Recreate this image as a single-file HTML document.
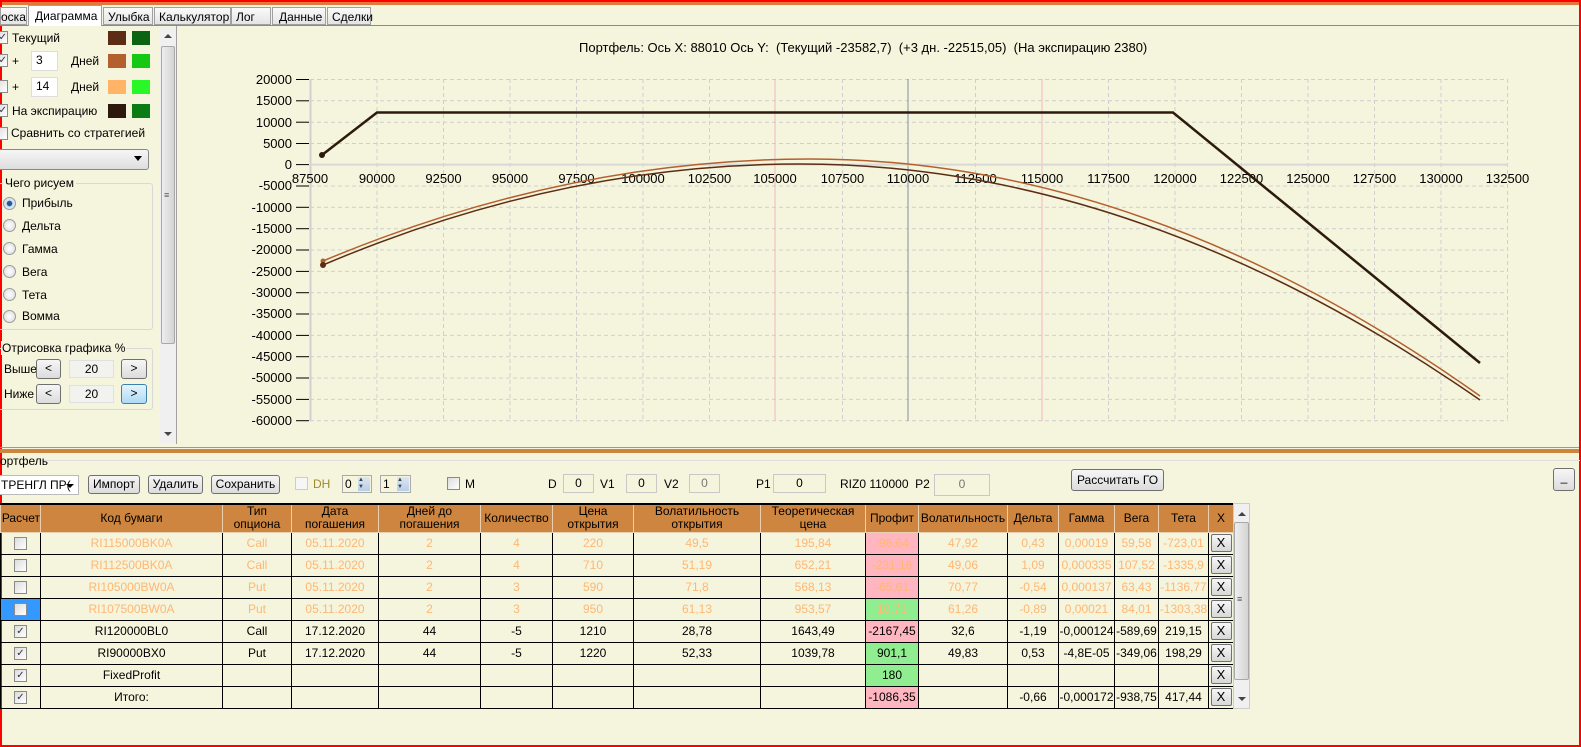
<!DOCTYPE html>
<html><head><meta charset="utf-8"><style>
*{box-sizing:border-box;margin:0;padding:0}
body{width:1581px;height:747px;overflow:hidden;background:#f5f4dc;font-family:"Liberation Sans",sans-serif;font-size:12px;color:#000;position:relative}
.a{position:absolute;white-space:nowrap}
.btn{position:absolute;border:1px solid #707070;border-radius:3px;background:linear-gradient(#f6f6f6,#dcdcdc);text-align:center;font-size:12px;line-height:16px}
.box{position:absolute;border:1px solid #c8c8c8;background:#f5f4dc;text-align:center;line-height:16px}
.cb{position:absolute;width:13px;height:13px;border:1px solid #8a8a8a;background:linear-gradient(135deg,#dcdcdc,#fff);font-size:10px;line-height:11px;color:#334;text-align:center}
.sw{position:absolute;width:18px;height:14px}
.rd{position:absolute;width:13px;height:13px;border-radius:50%;border:1px solid #9a9a9a;background:radial-gradient(#fff,#d8d8d8)}
table{position:absolute;left:0;top:503px;border-collapse:collapse;table-layout:fixed;font-size:12px}
td,th{border:1px solid #000;height:22px;text-align:center;overflow:hidden;white-space:nowrap;padding:0}
th{background:#cd853f;font-weight:normal;height:28px;border-color:#e8d0b0;border-top:2px solid #000;line-height:13px}
tr.f td{color:#ffb774}
.pk{background:#ffb6c1}.gr{background:#90ee90}
.x{display:inline-block;width:21px;height:18px;border:1px solid #707070;border-radius:2px;background:linear-gradient(#f6f6f6,#d8d8d8);color:#000;line-height:16px;font-size:13px}
.c{display:inline-block;width:13px;height:13px;border:1px solid #8a8a8a;background:linear-gradient(135deg,#dcdcdc,#fff);vertical-align:middle;font-size:10px;line-height:11px;color:#334}
</style></head><body>
<div class="a" style="left:0;top:0;width:1581px;height:5px;background:#e07a3c;border-top:2px solid #f00"></div>
<div class="a" style="left:0;top:0;width:2px;height:747px;background:#f00"></div>
<div class="a" style="left:1579px;top:0;width:2px;height:747px;background:#f00"></div>
<div class="a" style="left:0;top:745px;width:1581px;height:2px;background:#f00"></div>
<div class="a" style="left:0;top:25px;width:1579px;height:1px;background:#8a8a8a"></div>
<div class="a" style="left:0;top:7px;width:27px;height:18px;border:1px solid #a0a0a0;background:linear-gradient(#fafafa,#e4e4e4);padding:2px 0 0 0">оска</div>
<div class="a" style="left:28px;top:5px;width:74px;height:21px;border:1px solid #a0a0a0;border-bottom:none;background:#fff;padding:3px 0 0 6px">Диаграмма</div>
<div class="a" style="left:103px;top:7px;width:50px;height:18px;border:1px solid #a0a0a0;background:linear-gradient(#fafafa,#e4e4e4);padding:2px 0 0 4px">Улыбка</div>
<div class="a" style="left:154px;top:7px;width:77px;height:18px;border:1px solid #a0a0a0;background:linear-gradient(#fafafa,#e4e4e4);padding:2px 0 0 4px">Калькулятор</div>
<div class="a" style="left:231px;top:7px;width:40px;height:18px;border:1px solid #a0a0a0;background:linear-gradient(#fafafa,#e4e4e4);padding:2px 0 0 4px">Лог</div>
<div class="a" style="left:272px;top:7px;width:54px;height:18px;border:1px solid #a0a0a0;background:linear-gradient(#fafafa,#e4e4e4);padding:2px 0 0 6px">Данные</div>
<div class="a" style="left:327px;top:7px;width:44px;height:18px;border:1px solid #a0a0a0;background:linear-gradient(#fafafa,#e4e4e4);padding:2px 0 0 4px">Сделки</div>
<div class="a" style="left:176px;top:26px;width:1px;height:418px;background:#a0a0a0"></div>
<div class="cb" style="left:-5px;top:31px;text-align:right">✓</div><div class="a" style="left:12px;top:31px">Текущий</div>
<div class="sw" style="left:108px;top:31px;background:#5c2d14"></div><div class="sw" style="left:132px;top:31px;background:#0a6412"></div>
<div class="cb" style="left:-5px;top:54px;text-align:right">✓</div><div class="a" style="left:12px;top:54px">+</div>
<div class="box" style="left:31px;top:51px;width:27px;height:20px;background:#fff;border-color:#ddd;text-align:left;padding-left:4px">3</div>
<div class="a" style="left:71px;top:54px">Дней</div>
<div class="sw" style="left:108px;top:54px;background:#b4602e"></div><div class="sw" style="left:132px;top:54px;background:#14c814"></div>
<div class="cb" style="left:-5px;top:80px"></div><div class="a" style="left:12px;top:80px">+</div>
<div class="box" style="left:31px;top:77px;width:27px;height:20px;background:#fff;border-color:#ddd;text-align:left;padding-left:4px">14</div>
<div class="a" style="left:71px;top:80px">Дней</div>
<div class="sw" style="left:108px;top:80px;background:#ffb468"></div><div class="sw" style="left:132px;top:80px;background:#28f828"></div>
<div class="cb" style="left:-5px;top:104px;text-align:right">✓</div><div class="a" style="left:12px;top:104px">На экспирацию</div>
<div class="sw" style="left:108px;top:104px;background:#2e1a0c"></div><div class="sw" style="left:132px;top:104px;background:#0a7c14"></div>
<div class="cb" style="left:-5px;top:127px"></div><div class="a" style="left:11px;top:126px">Сравнить со стратегией</div>
<div class="a" style="left:-4px;top:149px;width:153px;height:21px;border:1px solid #888;border-radius:3px;background:linear-gradient(#f6f6f6,#dedede)"><span style="position:absolute;right:6px;top:6px;border:4px solid transparent;border-top:5px solid #000"></span></div>
<div class="a" style="left:-2px;top:183px;width:155px;height:147px;border:1px solid #d8d8d8;border-radius:3px"></div>
<div class="a" style="left:3px;top:176px;background:#f5f4dc;padding:0 2px">Чего рисуем</div>
<div class="rd" style="left:3px;top:197px;background:radial-gradient(#1a5ca0 30%,#cfe0f0 40%,#eee)"></div><div class="a" style="left:22px;top:196px">Прибыль</div>
<div class="rd" style="left:3px;top:219px"></div><div class="a" style="left:22px;top:219px">Дельта</div>
<div class="rd" style="left:3px;top:242px"></div><div class="a" style="left:22px;top:242px">Гамма</div>
<div class="rd" style="left:3px;top:265px"></div><div class="a" style="left:22px;top:265px">Вега</div>
<div class="rd" style="left:3px;top:288px"></div><div class="a" style="left:22px;top:288px">Тета</div>
<div class="rd" style="left:3px;top:310px"></div><div class="a" style="left:22px;top:309px">Вомма</div>
<div class="a" style="left:-2px;top:348px;width:155px;height:62px;border:1px solid #d8d8d8;border-radius:3px"></div>
<div class="a" style="left:1px;top:341px;background:#f5f4dc;padding:0 1px">Отрисовка графика %</div>
<div class="a" style="left:4px;top:362px">Выше</div>
<div class="btn" style="left:36px;top:359px;width:25px;height:20px">&lt;</div>
<div class="box" style="left:69px;top:360px;width:45px;height:18px;background:#f2f2ee;border-color:#e0e0e0">20</div>
<div class="btn" style="left:121px;top:359px;width:26px;height:20px">&gt;</div>
<div class="a" style="left:4px;top:387px">Ниже</div>
<div class="btn" style="left:36px;top:384px;width:25px;height:20px">&lt;</div>
<div class="box" style="left:69px;top:385px;width:45px;height:18px;background:#f2f2ee;border-color:#e0e0e0">20</div>
<div class="btn" style="left:121px;top:384px;width:26px;height:20px;border-color:#3c7fb1;background:linear-gradient(#e5f4fc,#aedaf5)">&gt;</div>
<div class="a" style="left:160px;top:27px;width:16px;height:416px;background:#f0f0f0"></div>
<div class="a" style="left:161px;top:46px;width:14px;height:298px;border:1px solid #a8a8a8;border-radius:2px;background:linear-gradient(90deg,#eee,#d4d4d4)"></div>
<div class="a" style="left:164px;top:34px;border:4px solid transparent;border-bottom:4px solid #444;border-top:none"></div>
<div class="a" style="left:164px;top:432px;border:4px solid transparent;border-top:4px solid #444;border-bottom:none"></div>
<div class="a" style="left:164px;top:190px;font-size:9px;color:#555">≡</div>
<div class="a" style="left:579px;top:40px;font-size:13px">Портфель: Ось X: 88010 Ось Y:&nbsp; (Текущий -23582,7)&nbsp; (+3 дн. -22515,05)&nbsp; (На экспирацию 2380)</div>
<svg class="a" style="left:0;top:0" width="1581" height="445" font-family="Liberation Sans" font-size="13">
<g stroke="#cfcfcf" stroke-dasharray="4,3" stroke-width="1">
<line x1="310" y1="79.5" x2="1508" y2="79.5"/><line x1="310" y1="100.8" x2="1508" y2="100.8"/><line x1="310" y1="122.2" x2="1508" y2="122.2"/><line x1="310" y1="143.5" x2="1508" y2="143.5"/>
<line x1="310" y1="186" x2="1508" y2="186"/><line x1="310" y1="207.3" x2="1508" y2="207.3"/><line x1="310" y1="228.7" x2="1508" y2="228.7"/><line x1="310" y1="250" x2="1508" y2="250"/><line x1="310" y1="271.4" x2="1508" y2="271.4"/><line x1="310" y1="292.7" x2="1508" y2="292.7"/><line x1="310" y1="314" x2="1508" y2="314"/><line x1="310" y1="335.4" x2="1508" y2="335.4"/><line x1="310" y1="356.7" x2="1508" y2="356.7"/><line x1="310" y1="378" x2="1508" y2="378"/><line x1="310" y1="399.4" x2="1508" y2="399.4"/><line x1="310" y1="420.7" x2="1508" y2="420.7"/>
<line x1="377" y1="79" x2="377" y2="421"/><line x1="443.5" y1="79" x2="443.5" y2="421"/><line x1="510" y1="79" x2="510" y2="421"/><line x1="576.5" y1="79" x2="576.5" y2="421"/><line x1="643" y1="79" x2="643" y2="421"/><line x1="709.5" y1="79" x2="709.5" y2="421"/><line x1="842.5" y1="79" x2="842.5" y2="421"/><line x1="975.5" y1="79" x2="975.5" y2="421"/><line x1="1108.5" y1="79" x2="1108.5" y2="421"/><line x1="1175" y1="79" x2="1175" y2="421"/><line x1="1241.5" y1="79" x2="1241.5" y2="421"/><line x1="1308" y1="79" x2="1308" y2="421"/><line x1="1374.5" y1="79" x2="1374.5" y2="421"/><line x1="1441" y1="79" x2="1441" y2="421"/><line x1="1507.5" y1="79" x2="1507.5" y2="421"/>
</g>
<line x1="775" y1="79" x2="775" y2="421" stroke="#f4b8c0"/><line x1="1042" y1="79" x2="1042" y2="421" stroke="#f4b8c0"/>
<line x1="908" y1="79" x2="908" y2="421" stroke="#8890a0"/>
<line x1="310.5" y1="79" x2="310.5" y2="421" stroke="#d0d0d0" stroke-width="2"/>
<line x1="310" y1="164.6" x2="1508" y2="164.6" stroke="#d8d8d8" stroke-width="2"/>
<g stroke="#000"><line x1="296" y1="79.5" x2="309" y2="79.5"/><line x1="296" y1="100.8" x2="309" y2="100.8"/><line x1="296" y1="122.2" x2="309" y2="122.2"/><line x1="296" y1="143.5" x2="309" y2="143.5"/><line x1="296" y1="164.6" x2="309" y2="164.6"/><line x1="296" y1="186" x2="309" y2="186"/><line x1="296" y1="207.3" x2="309" y2="207.3"/><line x1="296" y1="228.7" x2="309" y2="228.7"/><line x1="296" y1="250" x2="309" y2="250"/><line x1="296" y1="271.4" x2="309" y2="271.4"/><line x1="296" y1="292.7" x2="309" y2="292.7"/><line x1="296" y1="314" x2="309" y2="314"/><line x1="296" y1="335.4" x2="309" y2="335.4"/><line x1="296" y1="356.7" x2="309" y2="356.7"/><line x1="296" y1="378" x2="309" y2="378"/><line x1="296" y1="399.4" x2="309" y2="399.4"/><line x1="296" y1="420.7" x2="309" y2="420.7"/></g>
<g text-anchor="end" fill="#000"><text x="292" y="84">20000</text><text x="292" y="105">15000</text><text x="292" y="127">10000</text><text x="292" y="148">5000</text><text x="292" y="169">0</text><text x="292" y="190">-5000</text><text x="292" y="212">-10000</text><text x="292" y="233">-15000</text><text x="292" y="254">-20000</text><text x="292" y="276">-25000</text><text x="292" y="297">-30000</text><text x="292" y="318">-35000</text><text x="292" y="340">-40000</text><text x="292" y="361">-45000</text><text x="292" y="382">-50000</text><text x="292" y="404">-55000</text><text x="292" y="425">-60000</text></g>
<g text-anchor="middle" fill="#000"><text x="310" y="183">87500</text><text x="377" y="183">90000</text><text x="443.5" y="183">92500</text><text x="510" y="183">95000</text><text x="576.5" y="183">97500</text><text x="643" y="183">100000</text><text x="709.5" y="183">102500</text><text x="775" y="183">105000</text><text x="842.5" y="183">107500</text><text x="908" y="183">110000</text><text x="975.5" y="183">112500</text><text x="1042" y="183">115000</text><text x="1108.5" y="183">117500</text><text x="1175" y="183">120000</text><text x="1241.5" y="183">122500</text><text x="1308" y="183">125000</text><text x="1374.5" y="183">127500</text><text x="1441" y="183">130000</text><text x="1507.5" y="183">132500</text></g>
<path d="M322 155 L377 112.5 L1173 112.5 L1480 363" fill="none" stroke="#2e1a0c" stroke-width="2.5"/>
<circle cx="322" cy="155" r="3" fill="#2e1a0c"/>
<path d="M323 261 Q566 159 810 159 Q1145 159 1480 396" fill="none" stroke="#b4602e" stroke-width="1.5"/>
<path d="M323 265 Q561 164 800 164 Q1140 164 1480 400" fill="none" stroke="#5c2d14" stroke-width="1.5"/>
<circle cx="323" cy="261" r="2.5" fill="#b4602e"/><circle cx="323" cy="265" r="3" fill="#5c2d14"/>
</svg>
<div class="a" style="left:0;top:447px;width:1579px;height:1px;background:#999"></div>
<div class="a" style="left:0;top:449px;width:1579px;height:4px;background:#cd853f"></div>
<div class="a" style="left:40px;top:460px;width:1540px;height:1px;background:#ddd"></div>
<div class="a" style="left:0;top:454px">ортфель</div>
<div class="a" style="left:-2px;top:475px;width:81px;height:20px;border:1px solid #bbb;background:#fff;padding:2px 0 0 2px;overflow:hidden">ТРЕНГЛ ПР(<span style="position:absolute;right:4px;top:8px;border:4px solid transparent;border-top:4px solid #000"></span></div>
<div class="btn" style="left:88px;top:475px;width:52px;height:19px">Импорт</div>
<div class="btn" style="left:148px;top:475px;width:55px;height:19px">Удалить</div>
<div class="btn" style="left:211px;top:475px;width:69px;height:19px">Сохранить</div>
<div class="cb" style="left:295px;top:477px;border-color:#ccc;background:#f6f6f6"></div><div class="a" style="left:313px;top:477px;color:#a08a30">DH</div>
<div class="box" style="left:342px;top:475px;width:30px;height:18px;border-color:#aaa;text-align:left;padding-left:2px">0<span style="position:absolute;right:1px;top:1px;width:12px;height:14px;background:linear-gradient(#dde7f3,#b8cde6);font-size:6px;line-height:7px;color:#345">▲<br>▼</span></div>
<div class="box" style="left:380px;top:475px;width:31px;height:18px;border-color:#aaa;text-align:left;padding-left:2px">1<span style="position:absolute;right:1px;top:1px;width:12px;height:14px;background:linear-gradient(#dde7f3,#b8cde6);font-size:6px;line-height:7px;color:#345">▲<br>▼</span></div>
<div class="cb" style="left:447px;top:477px"></div><div class="a" style="left:465px;top:477px">M</div>
<div class="a" style="left:548px;top:477px">D</div><div class="box" style="left:563px;top:474px;width:31px;height:19px">0</div>
<div class="a" style="left:600px;top:477px">V1</div><div class="box" style="left:626px;top:474px;width:31px;height:19px">0</div>
<div class="a" style="left:664px;top:477px">V2</div><div class="box" style="left:689px;top:474px;width:31px;height:19px;color:#777">0</div>
<div class="a" style="left:756px;top:477px">P1</div><div class="box" style="left:773px;top:474px;width:53px;height:19px">0</div>
<div class="a" style="left:840px;top:477px">RIZ0 110000&nbsp; P2</div><div class="box" style="left:934px;top:474px;width:56px;height:22px;line-height:19px;color:#777">0</div>
<div class="btn" style="left:1071px;top:469px;width:93px;height:22px;line-height:20px">Рассчитать ГО</div>
<div class="btn" style="left:1553px;top:468px;width:22px;height:23px">_</div>
<table>
<colgroup><col style="width:40px"><col style="width:182px"><col style="width:69px"><col style="width:87px"><col style="width:102px"><col style="width:72px"><col style="width:81px"><col style="width:127px"><col style="width:105px"><col style="width:53px"><col style="width:89px"><col style="width:51px"><col style="width:56px"><col style="width:44px"><col style="width:50px"><col style="width:25px"></colgroup>
<tr><th style="text-align:right">Расчет</th><th>Код бумаги</th><th>Тип<br>опциона</th><th>Дата<br>погашения</th><th>Дней до<br>погашения</th><th>Количество</th><th>Цена<br>открытия</th><th>Волатильность<br>открытия</th><th>Теоретическая<br>цена</th><th>Профит</th><th>Волатильность</th><th>Дельта</th><th>Гамма</th><th>Вега</th><th>Тета</th><th>X</th></tr>
<tr class="f"><td><span class="c"></span></td><td>RI115000BK0A</td><td>Call</td><td>05.11.2020</td><td>2</td><td>4</td><td>220</td><td>49,5</td><td>195,84</td><td class="pk">-96,64</td><td>47,92</td><td>0,43</td><td>0,00019</td><td>59,58</td><td>-723,01</td><td><span class="x">X</span></td></tr>
<tr class="f"><td><span class="c"></span></td><td>RI112500BK0A</td><td>Call</td><td>05.11.2020</td><td>2</td><td>4</td><td>710</td><td>51,19</td><td>652,21</td><td class="pk">-231,16</td><td>49,06</td><td>1,09</td><td>0,000335</td><td>107,52</td><td>-1335,9</td><td><span class="x">X</span></td></tr>
<tr class="f"><td><span class="c"></span></td><td>RI105000BW0A</td><td>Put</td><td>05.11.2020</td><td>2</td><td>3</td><td>590</td><td>71,8</td><td>568,13</td><td class="pk">-65,61</td><td>70,77</td><td>-0,54</td><td>0,000137</td><td>63,43</td><td>-1136,77</td><td><span class="x">X</span></td></tr>
<tr class="f"><td style="background:#3399ff"><span class="c"></span></td><td>RI107500BW0A</td><td>Put</td><td>05.11.2020</td><td>2</td><td>3</td><td>950</td><td>61,13</td><td>953,57</td><td class="gr">10,71</td><td>61,26</td><td>-0,89</td><td>0,00021</td><td>84,01</td><td>-1303,38</td><td><span class="x">X</span></td></tr>
<tr><td><span class="c">✓</span></td><td>RI120000BL0</td><td>Call</td><td>17.12.2020</td><td>44</td><td>-5</td><td>1210</td><td>28,78</td><td>1643,49</td><td class="pk">-2167,45</td><td>32,6</td><td>-1,19</td><td>-0,000124</td><td>-589,69</td><td>219,15</td><td><span class="x">X</span></td></tr>
<tr><td><span class="c">✓</span></td><td>RI90000BX0</td><td>Put</td><td>17.12.2020</td><td>44</td><td>-5</td><td>1220</td><td>52,33</td><td>1039,78</td><td class="gr">901,1</td><td>49,83</td><td>0,53</td><td>-4,8E-05</td><td>-349,06</td><td>198,29</td><td><span class="x">X</span></td></tr>
<tr><td><span class="c">✓</span></td><td>FixedProfit</td><td></td><td></td><td></td><td></td><td></td><td></td><td></td><td class="gr">180</td><td></td><td></td><td></td><td></td><td></td><td><span class="x">X</span></td></tr>
<tr><td><span class="c">✓</span></td><td>Итого:</td><td></td><td></td><td></td><td></td><td></td><td></td><td></td><td class="pk">-1086,35</td><td></td><td>-0,66</td><td>-0,000172</td><td>-938,75</td><td>417,44</td><td><span class="x">X</span></td></tr>
</table>
<div class="a" style="left:1233px;top:503px;width:17px;height:206px;background:#f0f0f0;border:1px solid #ccc"></div>
<div class="a" style="left:1234px;top:522px;width:15px;height:158px;border:1px solid #a8a8a8;border-radius:2px;background:linear-gradient(90deg,#eee,#d4d4d4)"></div>
<div class="a" style="left:1238px;top:512px;border:4px solid transparent;border-bottom:4px solid #444;border-top:none"></div>
<div class="a" style="left:1238px;top:697px;border:4px solid transparent;border-top:4px solid #444;border-bottom:none"></div>
<div class="a" style="left:1237px;top:594px;font-size:9px;color:#555">≡</div>
</body></html>
